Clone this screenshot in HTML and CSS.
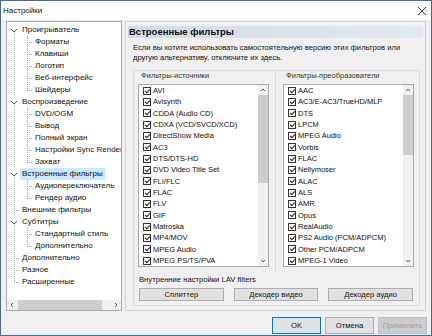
FILE: index.html
```html
<!DOCTYPE html>
<html lang="ru">
<head>
  <meta charset="UTF-8" />
  <title>Настройки</title>
  <link rel="stylesheet" href="styles.css">
</head>
<body>
  <div class="window">
    <div class="titlebar">
      <span class="title">Настройки</span>
      <svg class="close" width="10" height="10" viewBox="0 0 10 10"><path d="M1 1 L9 9 M9 1 L1 9" stroke="#222" stroke-width="0.9" fill="none"/></svg>
    </div>

    <div class="main">
      <div class="tree">
        <div class="rows">
          <div class="row"><span class="g x"><svg width="13" height="12"><path d="M4 5 L7 8 L10 5" stroke="#555" fill="none"/></svg></span><span class="label">Проигрыватель</span></div>
          <div class="row"><span class="g v"></span><span class="g t"></span><span class="label">Форматы</span></div>
          <div class="row"><span class="g v"></span><span class="g t"></span><span class="label">Клавиши</span></div>
          <div class="row"><span class="g v"></span><span class="g t"></span><span class="label">Логотип</span></div>
          <div class="row"><span class="g v"></span><span class="g t"></span><span class="label">Веб-интерфейс</span></div>
          <div class="row"><span class="g v"></span><span class="g l"></span><span class="label">Шейдеры</span></div>
          <div class="row"><span class="g x"><svg width="13" height="12"><path d="M4 5 L7 8 L10 5" stroke="#555" fill="none"/></svg></span><span class="label">Воспроизведение</span></div>
          <div class="row"><span class="g v"></span><span class="g t"></span><span class="label">DVD/OGM</span></div>
          <div class="row"><span class="g v"></span><span class="g t"></span><span class="label">Вывод</span></div>
          <div class="row"><span class="g v"></span><span class="g t"></span><span class="label">Полный экран</span></div>
          <div class="row"><span class="g v"></span><span class="g t"></span><span class="label">Настройки Sync Render</span></div>
          <div class="row"><span class="g v"></span><span class="g l"></span><span class="label">Захват</span></div>
          <div class="row"><span class="g x"><svg width="13" height="12"><path d="M4 5 L7 8 L10 5" stroke="#555" fill="none"/></svg></span><span class="label selected">Встроенные фильтры</span></div>
          <div class="row"><span class="g v"></span><span class="g t"></span><span class="label">Аудиопереключатель</span></div>
          <div class="row"><span class="g v"></span><span class="g l"></span><span class="label">Рендер аудио</span></div>
          <div class="row"><span class="g t"></span><span class="label">Внешние фильтры</span></div>
          <div class="row"><span class="g x"><svg width="13" height="12"><path d="M4 5 L7 8 L10 5" stroke="#555" fill="none"/></svg></span><span class="label">Субтитры</span></div>
          <div class="row"><span class="g v"></span><span class="g t"></span><span class="label">Стандартный стиль</span></div>
          <div class="row"><span class="g v"></span><span class="g l"></span><span class="label">Дополнительно</span></div>
          <div class="row"><span class="g t"></span><span class="label">Дополнительно</span></div>
          <div class="row"><span class="g t"></span><span class="label">Разное</span></div>
          <div class="row"><span class="g l"></span><span class="label">Расширенные</span></div>
        </div>
        <div class="hscroll">
          <span class="arrow"><svg width="10" height="10"><path d="M6 3 L4 5 L6 7" stroke="#606060" fill="none"/></svg></span>
          <span class="track"><span class="thumb"></span></span>
          <span class="arrow"><svg width="10" height="10"><path d="M4 3 L6 5 L4 7" stroke="#606060" fill="none"/></svg></span>
        </div>
      </div>

      <div class="page">
        <div class="page-title">Встроенные фильтры</div>
        <p class="desc">Если вы хотите использовать самостоятельную версию этих фильтров или<br>другую альтернативу, отключите их здесь.</p>

        <div class="frame">
          <div class="cols">
            <div class="col left">
              <div class="legend">Фильтры-источники</div>
              <div class="list">
                <div class="items">
                  <div class="item"><span class="cb"></span>AVI</div>
                  <div class="item"><span class="cb"></span>Avisynth</div>
                  <div class="item"><span class="cb"></span>CDDA (Audio CD)</div>
                  <div class="item"><span class="cb"></span>CDXA (VCD/SVCD/XCD)</div>
                  <div class="item"><span class="cb"></span>DirectShow Media</div>
                  <div class="item"><span class="cb"></span>AC3</div>
                  <div class="item"><span class="cb"></span>DTS/DTS-HD</div>
                  <div class="item"><span class="cb"></span>DVD Video Title Set</div>
                  <div class="item"><span class="cb"></span>FLI/FLC</div>
                  <div class="item"><span class="cb"></span>FLAC</div>
                  <div class="item"><span class="cb"></span>FLV</div>
                  <div class="item"><span class="cb"></span>GIF</div>
                  <div class="item"><span class="cb"></span>Matroska</div>
                  <div class="item"><span class="cb"></span>MP4/MOV</div>
                  <div class="item"><span class="cb"></span>MPEG Audio</div>
                  <div class="item"><span class="cb"></span>MPEG PS/TS/PVA</div>
                </div>
                <div class="vscroll">
                  <span class="arrow"><svg width="10" height="10"><path d="M3 6 L5 4 L7 6" stroke="#606060" fill="none"/></svg></span>
                  <span class="track"><span class="thumb long"></span></span>
                  <span class="arrow"><svg width="10" height="10"><path d="M3 4 L5 6 L7 4" stroke="#606060" fill="none"/></svg></span>
                </div>
              </div>
            </div>
            <div class="col right">
              <div class="legend">Фильтры-преобразователи</div>
              <div class="list">
                <div class="items">
                  <div class="item"><span class="cb"></span>AAC</div>
                  <div class="item"><span class="cb"></span>AC3/E-AC3/TrueHD/MLP</div>
                  <div class="item"><span class="cb"></span>DTS</div>
                  <div class="item"><span class="cb"></span>LPCM</div>
                  <div class="item"><span class="cb"></span>MPEG Audio</div>
                  <div class="item"><span class="cb"></span>Vorbis</div>
                  <div class="item"><span class="cb"></span>FLAC</div>
                  <div class="item"><span class="cb"></span>Nellymoser</div>
                  <div class="item"><span class="cb"></span>ALAC</div>
                  <div class="item"><span class="cb"></span>ALS</div>
                  <div class="item"><span class="cb"></span>AMR</div>
                  <div class="item"><span class="cb"></span>Opus</div>
                  <div class="item"><span class="cb"></span>RealAudio</div>
                  <div class="item"><span class="cb"></span>PS2 Audio (PCM/ADPCM)</div>
                  <div class="item"><span class="cb"></span>Other PCM/ADPCM</div>
                  <div class="item"><span class="cb"></span>MPEG-1 Video</div>
                </div>
                <div class="vscroll">
                  <span class="arrow"><svg width="10" height="10"><path d="M3 6 L5 4 L7 6" stroke="#606060" fill="none"/></svg></span>
                  <span class="track"><span class="thumb short"></span></span>
                  <span class="arrow"><svg width="10" height="10"><path d="M3 4 L5 6 L7 4" stroke="#606060" fill="none"/></svg></span>
                </div>
              </div>
            </div>
          </div>

          <div class="lav-label">Внутренние настройки LAV filters</div>
          <div class="lav-buttons">
            <button class="btn">Сплиттер</button>
            <button class="btn">Декодер видео</button>
            <button class="btn">Декодер аудио</button>
          </div>
        </div>
      </div>
    </div>

    <div class="footer">
      <button class="btn default">OK</button>
      <button class="btn">Отмена</button>
      <button class="btn" disabled>Применить</button>
    </div>
  </div>
</body>
</html>
```

FILE: styles.css
```css
body {
  margin: 0;
  font-family: 'Liberation Sans', Arial, sans-serif;
  font-size: 8px;
  color: #111;
  background: #f0f0f0;
}

.window {
  width: 432px;
  height: 336px;
  box-sizing: border-box;
  border: 1px solid #46698d;
  background: #f0f0f0;
  display: flex;
  flex-direction: column;
}

.titlebar {
  height: 19px;
  background: #fff;
  display: flex;
  align-items: center;
  justify-content: space-between;
  padding-left: 2px;
}

.title {
  font-size: 8px;
}

.close {
  margin-right: 4px;
}

.main {
  display: flex;
  gap: 3px;
  padding: 1px 5px 0 5px;
  height: 290px;
}

/* tree */

.tree {
  width: 116px;
  height: 290px;
  box-sizing: border-box;
  border: 1px solid #a9a9a9;
  background: #fff;
  display: flex;
  flex-direction: column;
}

.rows {
  flex: 1;
  padding-top: 2px;
  overflow: hidden;
}

.row {
  display: flex;
  height: 12px;
  line-height: 12px;
  white-space: nowrap;
}

.g {
  flex: none;
  width: 13px;
  height: 12px;
  background-repeat: no-repeat;
}

.g svg {
  display: block;
}

.g.v {
  background-image: repeating-linear-gradient(to bottom, #a0a0a0 0 1px, transparent 1px 2px);
  background-size: 1px 12px;
  background-position: 7px 0;
}

.g.t {
  background-image:
    repeating-linear-gradient(to bottom, #a0a0a0 0 1px, transparent 1px 2px),
    repeating-linear-gradient(to right, #a0a0a0 0 1px, transparent 1px 2px);
  background-size: 1px 12px, 6px 1px;
  background-position: 7px 0, 7px 6px;
}

.g.l {
  background-image:
    repeating-linear-gradient(to bottom, #a0a0a0 0 1px, transparent 1px 2px),
    repeating-linear-gradient(to right, #a0a0a0 0 1px, transparent 1px 2px);
  background-size: 1px 7px, 6px 1px;
  background-position: 7px 0, 7px 6px;
}

.g.x {
  background-image: repeating-linear-gradient(to bottom, #a0a0a0 0 1px, transparent 1px 2px);
  background-size: 1px 2px;
  background-position: 7px 10px;
}

.label {
  padding: 0 2px;
}

.label.selected {
  background: #cce8ff;
}

.hscroll {
  height: 10px;
  display: flex;
  background: #f0f0f0;
}

.hscroll .arrow {
  width: 10px;
  flex: none;
}

.hscroll .track {
  flex: 1;
  display: flex;
}

.hscroll .thumb {
  width: 84px;
  margin-left: 1px;
  background: #cdcdcd;
}

/* right page */

.page {
  flex: 1;
  box-sizing: border-box;
  height: 290px;
  border: 1px solid #d3d3d3;
  padding: 4px 2px 0 2px;
}

.page-title {
  height: 12px;
  line-height: 12px;
  padding-left: 1px;
  font-size: 9.5px;
  font-weight: bold;
  background: linear-gradient(to right, #d2dce8, #e3e9f0);
}

.desc {
  margin: 4.5px 0 0 5px;
  line-height: 10px;
  font-size: 7.65px;
}

.frame {
  margin: 7.5px 3px 0 5px;
  border: 1px solid #dcdcdc;
  padding-bottom: 4px;
}

.cols {
  display: flex;
}

.col {
  padding-bottom: 5px;
}

.col.left {
  width: 142px;
  padding-left: 4px;
  box-sizing: border-box;
  border-right: 1px solid #dcdcdc;
}

.col.right {
  flex: 1;
  padding-left: 7px;
}

.legend {
  margin-top: -7px;
  margin-left: 2px;
  height: 10px;
  line-height: 10px;
  display: inline-block;
  padding: 0 1px;
  background: #f0f0f0;
  color: #333;
  font-size: 7.5px;
}

.list {
  margin-top: 3px;
  width: 131px;
  height: 183.3px;
  box-sizing: border-box;
  border: 1px solid #a9a9a9;
  background: #fff;
  display: flex;
}

.items {
  flex: 1;
  overflow: hidden;
}

.item {
  height: 11.333px;
  line-height: 11.333px;
  padding-left: 4px;
  display: flex;
  align-items: center;
  white-space: nowrap;
  font-size: 7.5px;
}

.cb {
  flex: none;
  width: 8px;
  height: 8px;
  box-sizing: border-box;
  border: 1px solid #333;
  margin-right: 2px;
  display: flex;
  justify-content: center;
  align-items: center;
}

.cb::after {
  content: "";
  width: 2px;
  height: 4px;
  border-right: 1px solid #222;
  border-bottom: 1px solid #222;
  transform: rotate(45deg);
  margin-top: -1px;
}

.vscroll {
  width: 10px;
  flex: none;
  display: flex;
  flex-direction: column;
  background: #f0f0f0;
}

.vscroll .arrow {
  height: 10px;
  flex: none;
}

.vscroll .track {
  flex: 1;
}

.vscroll .thumb {
  display: block;
  background: #cdcdcd;
}

.thumb.long {
  height: 88px;
}

.thumb.short {
  height: 60px;
}

.arrow svg {
  display: block;
}

.lav-label {
  margin: 3px 0 0 5px;
  line-height: 10px;
  font-size: 7.65px;
}

.lav-buttons {
  display: grid;
  grid-template-columns: repeat(3, 1fr);
  gap: 10px;
  margin: 2.7px 6px 0 5px;
}

.btn {
  font-family: 'Liberation Sans', Arial, sans-serif;
  font-size: 7.65px;
  height: 13px;
  padding: 0;
  background: #e1e1e1;
  border: 1px solid #adadad;
  color: #111;
}

/* footer */

.footer {
  display: flex;
  justify-content: flex-end;
  gap: 4px;
  padding: 6px 4px 0 0;
}

.footer .btn {
  width: 49px;
  height: 17px;
}

.btn.default {
  border-color: #0078d7;
}

.btn:disabled {
  color: #a0a0a0;
  border-color: #bfbfbf;
  background: #cccccc;
}
```
